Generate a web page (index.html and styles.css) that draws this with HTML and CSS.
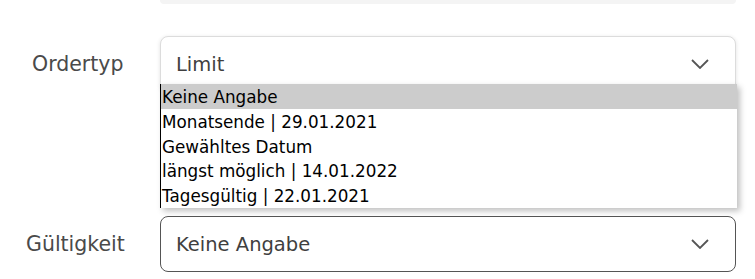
FILE: index.html
```html
<!DOCTYPE html>
<html lang="de">
<head>
<meta charset="utf-8">
<title>Order</title>
<link rel="stylesheet" href="styles.css">
</head>
<body>
<div class="form">
  <div class="row row-top">
    <div class="label"></div>
    <div class="field"><div class="strip"></div></div>
  </div>
  <div class="row row-order">
    <div class="label">Ordertyp</div>
    <div class="field">
      <div class="select open">
        <span class="value">Limit</span>
        <svg class="chev" width="18" height="10" viewBox="0 0 18 10"><path d="M1 1 L9 9 L17 1" fill="none" stroke="#555" stroke-width="1.8"/></svg>
      </div>
      <ul class="menu">
        <li class="opt active">Keine Angabe</li>
        <li class="opt">Monatsende | 29.01.2021</li>
        <li class="opt">Gewähltes Datum</li>
        <li class="opt">längst möglich | 14.01.2022</li>
        <li class="opt">Tagesgültig | 22.01.2021</li>
      </ul>
    </div>
  </div>
  <div class="row row-valid">
    <div class="label">Gültigkeit</div>
    <div class="field">
      <div class="select">
        <span class="value">Keine Angabe</span>
        <svg class="chev" width="18" height="10" viewBox="0 0 18 10"><path d="M1 1 L9 9 L17 1" fill="none" stroke="#555" stroke-width="1.8"/></svg>
      </div>
    </div>
  </div>
</div>
</body>
</html>
```
FILE: styles.css
```css
html, body {
  margin: 0;
  padding: 0;
  background: #fff;
}
body {
  font-family: "DejaVu Sans", "Open Sans", sans-serif;
  color: #444;
}
.form {
  display: flex;
  flex-direction: column;
}
.row {
  display: flex;
  align-items: center;
}
.label {
  width: 160px;
  box-sizing: border-box;
  padding-left: 32px;
  font-size: 20.5px;
  color: #4a4a4a;
}
.row-valid .label {
  padding-left: 26px;
}
.field {
  width: 577px;
  position: relative;
}
.strip {
  height: 4px;
  background: #f4f4f4;
  border-radius: 0 0 8px 8px;
  margin-right: 1px;
}
.row-order {
  margin-top: 32px;
}
.row-valid {
  margin-top: 124px;
}
.select {
  box-sizing: border-box;
  height: 56px;
  width: 576px;
  border: 1px solid #555;
  border-radius: 8px;
  display: flex;
  align-items: center;
  justify-content: space-between;
  padding: 0 26px 0 15px;
  font-size: 19.5px;
  color: #3f3f3f;
  background: #fff;
}
.select.open {
  border-color: #dcdcdc;
  box-shadow: 0 1px 4px rgba(0,0,0,0.12);
}
.menu {
  position: absolute;
  left: 0;
  top: 48px;
  width: 577px;
  box-sizing: border-box;
  margin: 0;
  padding: 0;
  list-style: none;
  background: #fff;
  border-left: 1px solid #000;
  box-shadow: 3px 3px 6px rgba(0,0,0,0.25);
}
.opt {
  height: 24.8px;
  line-height: 26px;
  font-size: 16.8px;
  color: #000;
  padding-left: 1px;
  white-space: nowrap;
}
.opt.active {
  background: #cccccc;
}
```
